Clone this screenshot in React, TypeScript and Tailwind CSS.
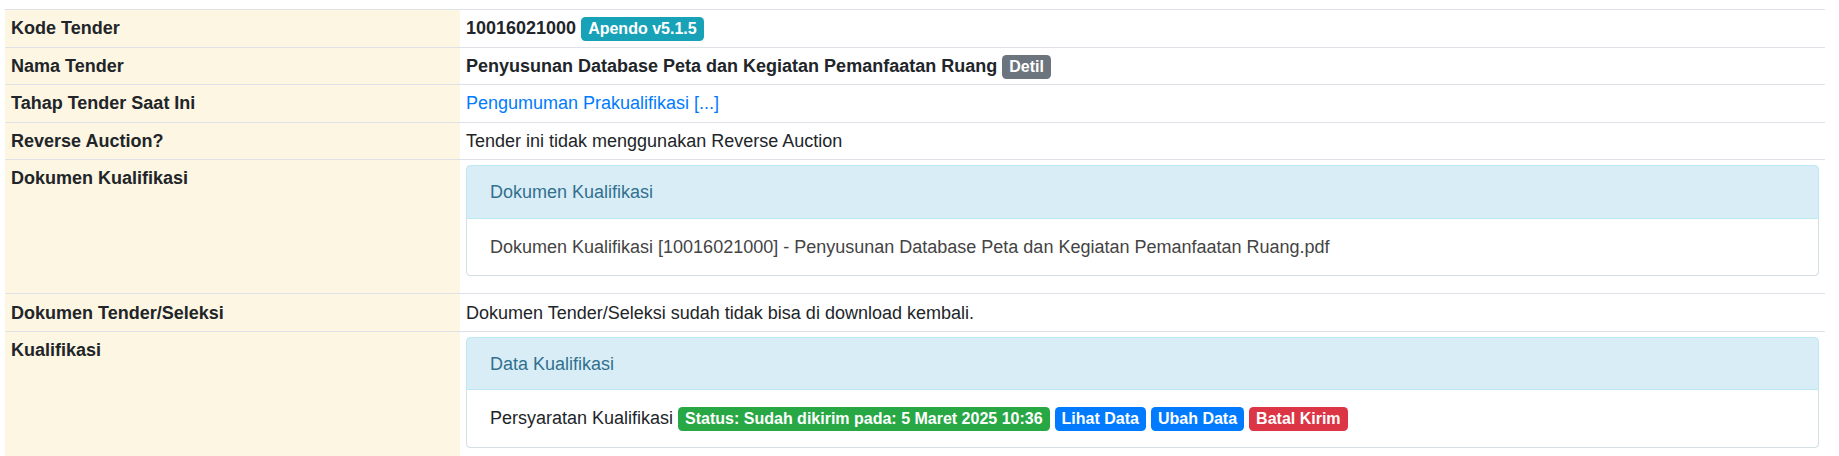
import React from 'react';

const Badge: React.FC<{ color: string; children: React.ReactNode }> = ({ color, children }) => (
    <span className={`inline-block rounded-[4.4px] px-[7px] py-[4px] text-[16px] font-bold leading-none text-white ${color}`}>
        {children}
    </span>
);

const Panel: React.FC<{ title: string; children: React.ReactNode }> = ({ title, children }) => (
    <div className="mb-[12px]">
        <div className="rounded-t-[4.4px] border border-[#bce8f1] bg-[#d9edf7] px-[23px] py-[12.5px] leading-[26.4px] text-[#31708f]">
            {title}
        </div>
        <div className="rounded-b-[4.4px] border border-t-0 border-[#d3dfe3] bg-white px-[23px] py-[15px] leading-[26.4px] text-[#444]">
            {children}
        </div>
    </div>
);

const labelCls = 'w-[455px] border-t border-[#dee2e6] bg-[#fdf6e2] px-[6px] py-[5.25px] align-top font-bold';
const valueCls = 'border-t border-[#dee2e6] px-[6px] py-[5.25px] align-top';

export default function App() {
    return (
        <div
            className="min-h-screen bg-white pl-[5px] pr-[14px] pt-[9px] text-[18px] leading-[26px] text-[#212529]"
            style={{ fontFamily: '"Liberation Sans", Arial, sans-serif' }}
        >
            <table className="w-full border-collapse">
                <tbody>
                    <tr>
                        <td className={labelCls}>Kode Tender</td>
                        <td className={valueCls}>
                            <strong>10016021000</strong> <Badge color="bg-[#17a2b8]">Apendo v5.1.5</Badge>
                        </td>
                    </tr>
                    <tr>
                        <td className={labelCls}>Nama Tender</td>
                        <td className={valueCls}>
                            <strong>Penyusunan Database Peta dan Kegiatan Pemanfaatan Ruang</strong>{' '}
                            <Badge color="bg-[#6c757d]">Detil</Badge>
                        </td>
                    </tr>
                    <tr>
                        <td className={labelCls}>Tahap Tender Saat Ini</td>
                        <td className={valueCls}>
                            <a href="#" className="text-[#007bff]">Pengumuman Prakualifikasi [...]</a>
                        </td>
                    </tr>
                    <tr>
                        <td className={labelCls}>Reverse Auction?</td>
                        <td className={valueCls}>Tender ini tidak menggunakan Reverse Auction</td>
                    </tr>
                    <tr>
                        <td className={labelCls}>Dokumen Kualifikasi</td>
                        <td className={valueCls}>
                            <Panel title="Dokumen Kualifikasi">
                                Dokumen Kualifikasi [10016021000] - Penyusunan Database Peta dan Kegiatan Pemanfaatan Ruang.pdf
                            </Panel>
                        </td>
                    </tr>
                    <tr>
                        <td className={labelCls}>Dokumen Tender/Seleksi</td>
                        <td className={valueCls}>Dokumen Tender/Seleksi sudah tidak bisa di download kembali.</td>
                    </tr>
                    <tr>
                        <td className={labelCls}>Kualifikasi</td>
                        <td className={valueCls}>
                            <Panel title="Data Kualifikasi">
                                <span className="text-[#212529]">Persyaratan Kualifikasi</span>{' '}
                                <Badge color="bg-[#28a745]">Status: Sudah dikirim pada: 5 Maret 2025 10:36</Badge>{' '}
                                <Badge color="bg-[#007bff]">Lihat Data</Badge>{' '}
                                <Badge color="bg-[#007bff]">Ubah Data</Badge>{' '}
                                <Badge color="bg-[#dc3545]">Batal Kirim</Badge>
                            </Panel>
                        </td>
                    </tr>
                </tbody>
            </table>
        </div>
    );
}
